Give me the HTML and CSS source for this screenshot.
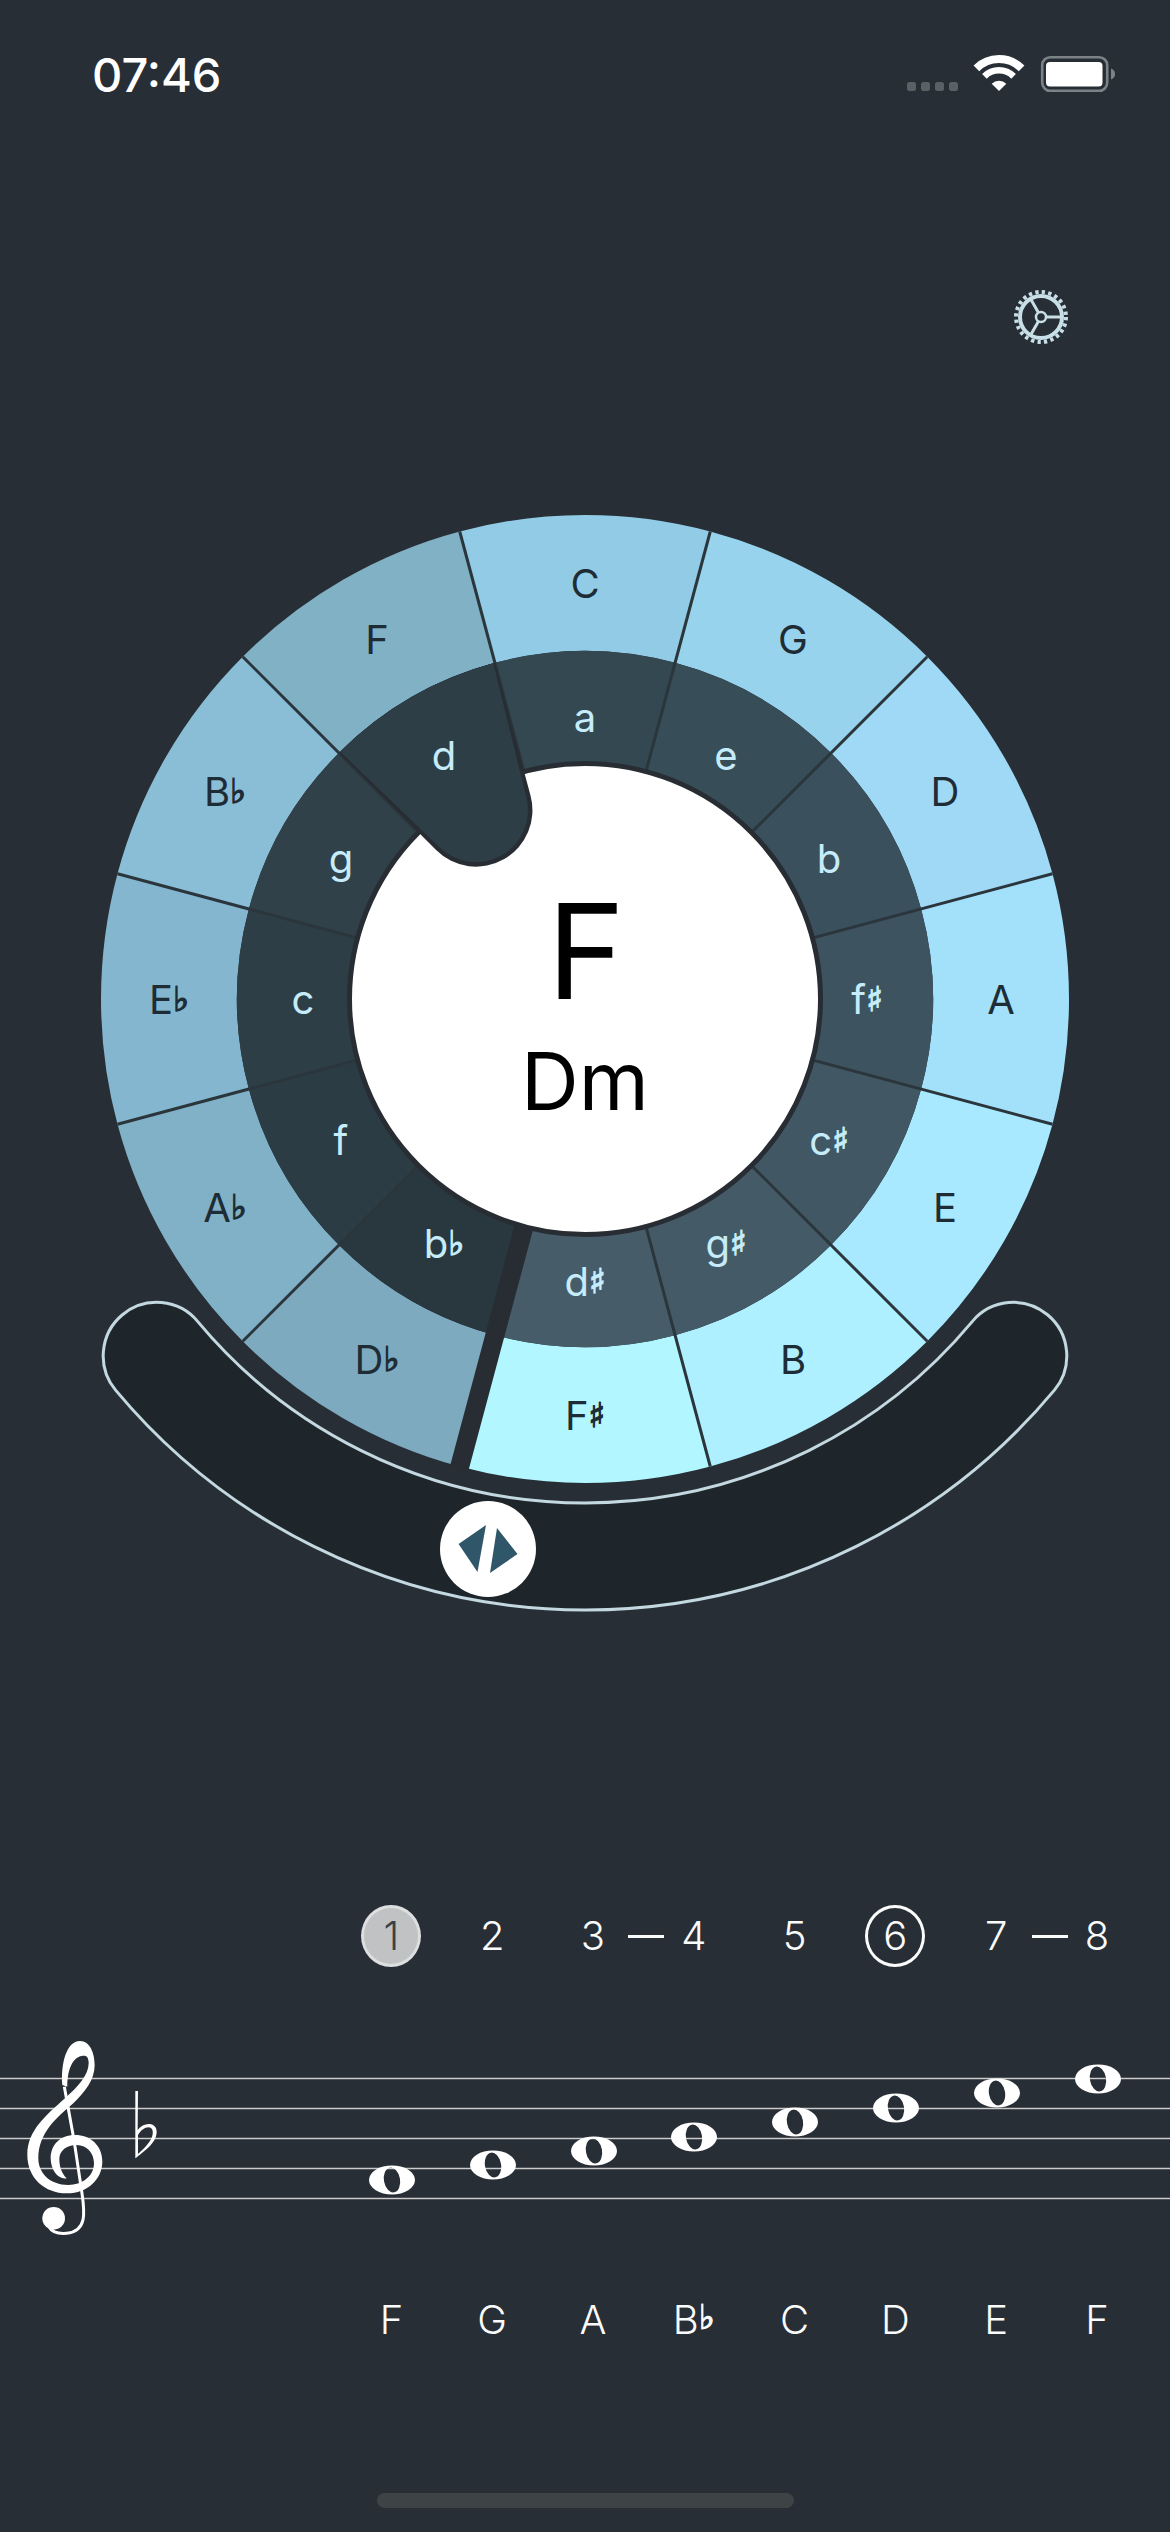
FILE: index.html
```html
<!DOCTYPE html>
<html lang="en">
<head>
<meta charset="utf-8">
<title>Circle of Fifths</title>
<link rel="stylesheet" href="styles.css">
</head>
<body>
<main class="screen">
  <header class="status">
    <span class="time">07:46</span>
    <svg class="status-icons" viewBox="900 50 220 46" width="220" height="46" aria-hidden="true">
      <g class="dots"><rect x="907" y="82" width="9" height="9" rx="2.5"/><rect x="921" y="82" width="9" height="9" rx="2.5"/><rect x="935" y="82" width="9" height="9" rx="2.5"/><rect x="949" y="82" width="9" height="9" rx="2.5"/></g>
      <g class="wifi" transform="translate(999 91)">
        <path class="wifi-o" d="M-22.6 -22.6A32 32 0 0 1 22.6 -22.6"/>
        <path class="wifi-m" d="M-14.6 -14.6A20.7 20.7 0 0 1 14.6 -14.6"/>
        <path class="wifi-c" d="M0 0L-7.3 -7.3A10.3 10.3 0 0 1 7.3 -7.3Z"/>
      </g>
      <rect class="batt-o" x="1042.2" y="57.2" width="65" height="33.6" rx="8"/>
      <rect class="batt-f" x="1046" y="62" width="56.5" height="24.5" rx="4"/>
      <path class="batt-t" d="M1111 68.5C1114 69.5 1115 71.5 1115 74C1115 76.5 1114 78.5 1111 79.5Z"/>
    </svg>
  </header>

  <div class="toolbar">
    <svg class="gear" viewBox="-28 -28 56 56" width="56" height="56" aria-label="Settings">
      <circle class="gear-teeth" r="25"/>
      <circle class="gear-ring" r="21"/>
      <circle class="gear-hub" r="5"/>
      <path class="gear-spoke" d="M5 0H21M-2.5 -4.3L-10.5 -18.2M-2.5 4.3L-10.5 18.2"/>
    </svg>
  </div>

  <svg class="wheel" viewBox="0 500 1170 1120" width="1170" height="1120">
    <defs>
      <path id="outer" d="M-125.27 -467.51A484 484 0 0 1 125.27 -467.51L90.07 -336.14A348 348 0 0 0 -90.07 -336.14Z"/>
      <path id="inner" d="M-90.07 -336.14A348 348 0 0 1 90.07 -336.14L61.08 -227.96A236 236 0 0 0 -61.08 -227.96Z"/>
      <line id="sep" x1="0" y1="-236" x2="0" y2="-484"/>
    </defs>
    <g transform="translate(585 999)">
      <path class="band" d="M-387.2 322.6A504 504 0 0 0 387.2 322.6A53.5 53.5 0 0 1 469.4 391.1A611 611 0 0 1 -469.4 391.1A53.5 53.5 0 0 1 -387.2 322.6Z"/>

      <use href="#outer" class="o0" />
      <use href="#outer" class="o1" transform="rotate(30)"/>
      <use href="#outer" class="o2" transform="rotate(60)"/>
      <use href="#outer" class="o3" transform="rotate(90)"/>
      <use href="#outer" class="o4" transform="rotate(120)"/>
      <use href="#outer" class="o5" transform="rotate(150)"/>
      <use href="#outer" class="o6" transform="rotate(180)"/>
      <use href="#outer" class="o7" transform="rotate(210)"/>
      <use href="#outer" class="o8" transform="rotate(240)"/>
      <use href="#outer" class="o9" transform="rotate(270)"/>
      <use href="#outer" class="o10" transform="rotate(300)"/>
      <use href="#outer" class="o11" transform="rotate(330)"/>

      <use href="#inner" class="i0"/>
      <use href="#inner" class="i1" transform="rotate(30)"/>
      <use href="#inner" class="i2" transform="rotate(60)"/>
      <use href="#inner" class="i3" transform="rotate(90)"/>
      <use href="#inner" class="i4" transform="rotate(120)"/>
      <use href="#inner" class="i5" transform="rotate(150)"/>
      <use href="#inner" class="i6" transform="rotate(180)"/>
      <use href="#inner" class="i7" transform="rotate(210)"/>
      <use href="#inner" class="i8" transform="rotate(240)"/>
      <use href="#inner" class="i9" transform="rotate(270)"/>
      <use href="#inner" class="i10" transform="rotate(300)"/>
      <use href="#inner" class="i11" transform="rotate(330)"/>

      <g class="seps">
        <use href="#sep" transform="rotate(15)"/>
        <use href="#sep" transform="rotate(45)"/>
        <use href="#sep" transform="rotate(75)"/>
        <use href="#sep" transform="rotate(105)"/>
        <use href="#sep" transform="rotate(135)"/>
        <use href="#sep" transform="rotate(165)"/>
        <use href="#sep" transform="rotate(225)"/>
        <use href="#sep" transform="rotate(255)"/>
        <use href="#sep" transform="rotate(285)"/>
        <use href="#sep" transform="rotate(315)"/>
        <use href="#sep" transform="rotate(345)"/>
      </g>
      <rect class="divider" x="-9.5" y="-487" width="19" height="252" transform="rotate(195)"/>

      <circle class="hole" r="235.5"/>

      <g transform="rotate(-30)">
        <path class="sel-edge" d="M-90.07 -336.14A348 348 0 0 1 90.07 -336.14L54.5 -203.4A56.4 56.4 0 0 1 -54.5 -203.4Z"/>
        <path class="sel-fill" d="M-88.5 -336.6A348 348 0 0 1 88.5 -336.6L50.2 -204.5A52 52 0 0 1 -50.2 -204.5Z"/>
      </g>

      <g class="lbl-o">
        <text x="0" y="-401.5">C</text>
        <text x="208" y="-345.5">G</text>
        <text x="360" y="-193.5">D</text>
        <text x="416" y="14.5">A</text>
        <text x="360" y="222.5">E</text>
        <text x="208" y="374.5">B</text>
        <text x="0" y="430.5">F<tspan class="acc" dy="-3">♯</tspan></text>
        <text x="-208" y="374.5">D<tspan class="acc" dy="-3">♭</tspan></text>
        <text x="-360" y="222.5">A<tspan class="acc" dy="-3">♭</tspan></text>
        <text x="-416" y="14.5">E<tspan class="acc" dy="-3">♭</tspan></text>
        <text x="-360" y="-193.5">B<tspan class="acc" dy="-3">♭</tspan></text>
        <text x="-208" y="-345.5">F</text>
      </g>
      <g class="lbl-i">
        <text x="0" y="-267.5">a</text>
        <text x="141" y="-229.5">e</text>
        <text x="244" y="-126.5">b</text>
        <text x="282" y="14.5">f<tspan class="acc" dy="-3">♯</tspan></text>
        <text x="244" y="155.5">c<tspan class="acc" dy="-3">♯</tspan></text>
        <text x="141" y="258.5">g<tspan class="acc" dy="-3">♯</tspan></text>
        <text x="0" y="296.5">d<tspan class="acc" dy="-3">♯</tspan></text>
        <text x="-141" y="258.5">b<tspan class="acc" dy="-3">♭</tspan></text>
        <text x="-244" y="155.5">f</text>
        <text x="-282" y="14.5">c</text>
        <text x="-244" y="-126.5">g</text>
        <text x="-141" y="-229.5">d</text>
      </g>

      <text class="key-major" x="1" y="0">F</text>
      <text class="key-minor" x="0" y="111">Dm</text>

      <circle class="knob" cx="-97" cy="550" r="48"/>
      <path class="knob-arrow" d="M-126.4 545L-99 526L-107.5 573ZM-88 529L-67.5 555L-95 574Z"/>
    </g>
  </svg>

  <div class="degrees">
    <span class="cell"><span class="badge badge-on">1</span></span>
    <span class="cell">2</span>
    <span class="cell dash">3</span>
    <span class="cell">4</span>
    <span class="cell">5</span>
    <span class="cell"><span class="badge">6</span></span>
    <span class="cell dash">7</span>
    <span class="cell">8</span>
  </div>

  <svg class="staff" viewBox="0 2030 1170 220" width="1170" height="220" aria-hidden="true">
    <defs>
      <path id="note" fill-rule="evenodd" d="M-23 0A23 14.5 0 1 1 23 0A23 14.5 0 1 1 -23 0ZM-2.17 -12.31A12.5 8 80 1 1 2.17 12.31A12.5 8 80 1 1 -2.17 -12.31Z"/>
    </defs>
    <g class="lines">
      <line x1="0" x2="1170" y1="2078.5" y2="2078.5"/>
      <line x1="0" x2="1170" y1="2108.5" y2="2108.5"/>
      <line x1="0" x2="1170" y1="2138.5" y2="2138.5"/>
      <line x1="0" x2="1170" y1="2168.5" y2="2168.5"/>
      <line x1="0" x2="1170" y1="2198.5" y2="2198.5"/>
    </g>
    <g transform="translate(10 2030) scale(.3333)">
      <path class="clef" d="M210 33C240 33 254 70 254 105C254 150 225 185 190 220C140 262 85 310 85 385C85 430 120 465 175 465C215 465 252 440 252 400C252 370 232 345 200 345C170 345 148 362 148 387C148 410 155 430 170 445C145 450 122 420 122 385C122 345 150 315 195 315C240 315 277 345 277 395C277 445 235 490 170 490C105 490 52 445 52 375C52 300 110 255 165 205C205 170 236 135 236 100C236 80 228 76 215 78C190 82 172 115 172 170L157 165C152 100 170 33 210 33Z"/>
      <path class="clef-stem" d="M163 170L192 330L216 490C224 545 232 605 170 610C145 612 125 605 118 592"/>
      <circle class="clef" cx="131" cy="565" r="34"/>
      <path class="clef" fill-rule="evenodd" d="M376 183H384L383 300C400 275 440 275 440 305C440 340 400 365 376 385ZM384 372C410 348 432 325 428 302C423 282 395 293 384 315Z"/>
    </g>
    <g class="notes">
      <use href="#note" x="392" y="2180"/>
      <use href="#note" x="493" y="2165"/>
      <use href="#note" x="594" y="2151"/>
      <use href="#note" x="694" y="2137"/>
      <use href="#note" x="795" y="2122"/>
      <use href="#note" x="896" y="2108"/>
      <use href="#note" x="997" y="2093"/>
      <use href="#note" x="1098" y="2079"/>
    </g>
  </svg>

  <div class="names">
    <span class="cell">F</span>
    <span class="cell">G</span>
    <span class="cell">A</span>
    <span class="cell">B<span class="acc-h">♭</span></span>
    <span class="cell">C</span>
    <span class="cell">D</span>
    <span class="cell">E</span>
    <span class="cell">F</span>
  </div>

  <div class="home-row"><span class="home"></span></div>
</main>
</body>
</html>
```

FILE: styles.css
```css
* { box-sizing: border-box; }
html, body { margin: 0; padding: 0; background: #282e35; }
.screen {
  width: 1170px;
  height: 2532px;
  overflow: hidden;
  background: #282e35;
  display: flex;
  flex-direction: column;
  font-family: Inter, "Noto Sans", sans-serif;
  color: #fafbfb;
}

/* status bar */
.status {
  height: 110px;
  padding: 50px 50px 0 92px;
  display: flex;
  justify-content: space-between;
  align-items: flex-start;
}
.time { font-size: 47px; line-height: 50px; font-weight: 500; color: #fff; }
.status-icons { display: block; }
.dots rect { fill: #5a6165; }
.wifi-o { fill: none; stroke: #fff; stroke-width: 8; }
.wifi-m { fill: none; stroke: #fff; stroke-width: 6.5; }
.wifi-c { fill: #fff; }
.batt-o { fill: none; stroke: #7c8387; stroke-width: 2.6; }
.batt-f { fill: #fff; }
.batt-t { fill: #7c8387; }

/* settings */
.toolbar {
  margin-top: 179px;
  padding-right: 101px;
  display: flex;
  justify-content: flex-end;
}
.gear { display: block; }
.gear-teeth { fill: none; stroke: #c8dfe7; stroke-width: 4; stroke-dasharray: 3.3 3.245; }
.gear-ring { fill: none; stroke: #c8dfe7; stroke-width: 4; }
.gear-hub { fill: none; stroke: #c8dfe7; stroke-width: 2.5; }
.gear-spoke { fill: none; stroke: #c8dfe7; stroke-width: 3; }

/* wheel */
.wheel { display: block; margin-top: 155px; flex: none; }
.band { fill: #1f262b; stroke: #c3d8e0; stroke-width: 3; }
.o0 { fill: #91cbe6; }
.o1 { fill: #98d3ed; }
.o2 { fill: #9fd9f5; }
.o3 { fill: #a3e1fb; }
.o4 { fill: #a9e9ff; }
.o5 { fill: #aef0ff; }
.o6 { fill: #b2f6ff; }
.o7 { fill: #7daabf; }
.o8 { fill: #81b1c7; }
.o9 { fill: #85b6cf; }
.o10 { fill: #8abed6; }
.o11 { fill: #80b1c5; }
.i0 { fill: #344852; }
.i1 { fill: #374d57; }
.i2 { fill: #3b505d; }
.i3 { fill: #3e5360; }
.i4 { fill: #415763; }
.i5 { fill: #445b67; }
.i6 { fill: #465d69; }
.i7 { fill: #29383f; }
.i8 { fill: #2c3c44; }
.i9 { fill: #2d3e47; }
.i10 { fill: #30414a; }
.i11 { fill: #2d3e47; }
.seps use { stroke: #2b363c; stroke-width: 3; }
.divider { fill: #272d33; }
.hole { fill: #fff; stroke: #272d33; stroke-width: 5; }
.sel-edge { fill: #272d33; }
.sel-fill { fill: #2d3e47; }

.lbl-o text, .lbl-i text {
  font-family: Inter, sans-serif;
  font-size: 40px;
  text-anchor: middle;
}
.lbl-o text { fill: #1e2c35; }
.lbl-i text { fill: #c6ecfa; }
.acc { font-family: "DejaVu Sans", sans-serif; font-size: 34px; font-weight: 400; }
.lbl-o .acc { stroke: #1e2c35; stroke-width: 1.3; }
.lbl-i .acc { stroke: #c6ecfa; stroke-width: 1.3; }
.key-major, .key-minor { font-family: Inter, sans-serif; fill: #000; text-anchor: middle; }
.key-major { font-size: 132px; }
.key-minor { font-size: 80px; }
.knob { fill: #fff; }
.knob-arrow { fill: #2f5669; }

/* degree row and name row share one column grid */
.degrees, .names {
  display: grid;
  grid-template-columns: repeat(8, 100.8px);
  padding-left: 341px;
  font-size: 40px;
  font-weight: 300;
}
.degrees { margin-top: 285px; height: 62px; }
.names { margin-top: 50px; height: 40px; }
.cell {
  position: relative;
  display: flex;
  align-items: center;
  justify-content: center;
  line-height: 40px;
}
.dash::after {
  content: "";
  position: absolute;
  left: calc(100% - 15px);
  top: 30px;
  width: 36px;
  height: 3px;
  background: #fafbfb;
}
.badge {
  width: 60px;
  height: 62px;
  border: 3px solid #fafbfb;
  border-radius: 50%;
  display: flex;
  align-items: center;
  justify-content: center;
}
.badge-on { background: #c0c2c4; border-color: #dcdedf; color: #3a4146; }
.acc-h { font-family: "DejaVu Sans", sans-serif; font-size: 34px; font-weight: 400; position: relative; top: -3px; -webkit-text-stroke: 1.1px #fafbfb; }

/* staff */
.staff { display: block; margin-top: 63px; flex: none; }
.lines line { stroke: #c9cbcc; stroke-width: 1.5; }
.clef { fill: #fff; }
.clef-stem { fill: none; stroke: #fff; stroke-width: 9; }
.notes use { fill: #fff; }

/* home indicator */
.home-row { margin-top: 153px; display: flex; justify-content: center; }
.home { width: 417px; height: 15px; border-radius: 8px; background: #3e4346; }
```
